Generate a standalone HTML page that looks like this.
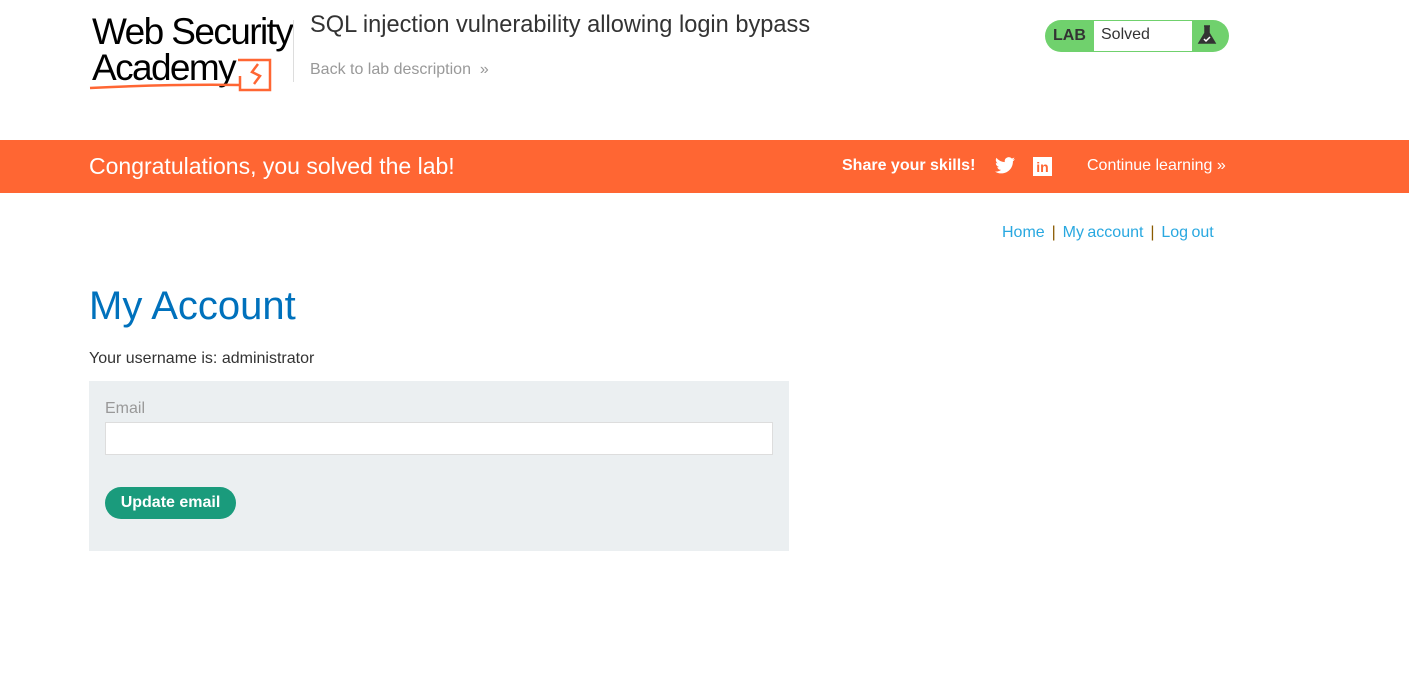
<!DOCTYPE html>
<html><head><meta charset="utf-8"><style>
body{margin:0;font-family:"Liberation Sans",sans-serif;background:#fff;width:1409px;height:697px;overflow:hidden;position:relative;color:#333}
.a{position:absolute}
</style></head><body>
<div class="a" style="left:92px;top:14px;font-size:37px;line-height:36px;letter-spacing:-1.6px;color:#000">Web Security</div>
<div class="a" style="left:92px;top:50px;font-size:37px;line-height:36px;letter-spacing:-1.6px;color:#000">Academy</div>
<svg class="a" style="left:88px;top:52px" width="186" height="40"><path d="M150 8h32v30h-30v-14M2 36q80-4 150-3" fill="none" stroke="#ff6633" stroke-width="2.5"/><path d="M170 12l-6 8 8 4-6 8" fill="none" stroke="#ff6633" stroke-width="2.5"/></svg>
<div class="a" style="left:293px;top:20px;width:1px;height:62px;background:#ddd"></div>
<div class="a" style="left:310px;top:12px;font-size:23.6px;color:#333">SQL injection vulnerability allowing login bypass</div>
<div class="a" style="left:310px;top:61px;font-size:16px;color:#999">Back to lab description &nbsp;»</div>
<div class="a" style="left:1045px;top:20px;width:184px;height:32px;border-radius:16px;background:#70d16d"></div>
<div class="a" style="left:1053px;top:27px;font-size:16px;font-weight:bold;color:#333">LAB</div>
<div class="a" style="left:1094px;top:21px;width:98px;height:30px;background:#fff"></div>
<div class="a" style="left:1101px;top:26px;font-size:16px;color:#333">Solved</div>
<svg class="a" style="left:1197px;top:24px" width="20" height="22"><path d="M7 2h6M8 2v7L2 19h16L12 9V2" fill="#333" stroke="#333" stroke-width="1.5"/><path d="M7 15l2 2 4-4" fill="none" stroke="#fff" stroke-width="1.5"/></svg>
<div class="a" style="left:0;top:140px;width:1409px;height:53px;background:#ff6633"></div>
<div class="a" style="left:89px;top:153px;font-size:23px;color:#fff">Congratulations, you solved the lab!</div>
<div class="a" style="left:842px;top:157px;font-size:16px;font-weight:bold;color:#fff">Share your skills!</div>
<svg class="a" style="left:995px;top:157px" width="20" height="17" viewBox="0 0 24 20"><path fill="#fff" d="M24 2.4a10 10 0 0 1-2.8.8A5 5 0 0 0 23.3.4a10 10 0 0 1-3.1 1.2A4.9 4.9 0 0 0 11.8 6 14 14 0 0 1 1.7.9a4.9 4.9 0 0 0 1.5 6.6 4.9 4.9 0 0 1-2.2-.6 4.9 4.9 0 0 0 3.9 4.9 5 5 0 0 1-2.2.1 4.9 4.9 0 0 0 4.6 3.4A9.9 9.9 0 0 1 0 17.3 14 14 0 0 0 7.5 19.5c9.1 0 14-7.5 14-14v-.6A10 10 0 0 0 24 2.4z"/></svg>
<div class="a" style="left:1033px;top:157px;width:19px;height:19px;background:#fff;color:#ff6633;font-weight:bold;font-size:14px;line-height:20px;text-align:center">in</div>
<div class="a" style="left:1087px;top:157px;font-size:16px;color:#fff">Continue learning »</div>
<div class="a" style="left:1002px;top:224px;font-size:16px;color:#29a8e0;word-spacing:-1px">Home <span style="color:#8a5a00">&nbsp;|&nbsp;</span> My account <span style="color:#8a5a00">&nbsp;|&nbsp;</span> Log out</div>
<div class="a" style="left:89px;top:284px;font-size:40px;color:#0071bc">My Account</div>
<div class="a" style="left:89px;top:350px;font-size:16px;color:#333">Your username is: administrator</div>
<div class="a" style="left:89px;top:381px;width:700px;height:170px;background:#ebeff1"></div>
<div class="a" style="left:105px;top:400px;font-size:16px;color:#999">Email</div>
<div class="a" style="left:105px;top:422px;width:666px;height:31px;background:#fff;border:1px solid #ddd"></div>
<div class="a" style="left:105px;top:487px;width:131px;height:32px;border-radius:16px;background:#1a9b7c;color:#fff;font-weight:bold;font-size:16px;line-height:32px;text-align:center">Update email</div>
</body></html>
